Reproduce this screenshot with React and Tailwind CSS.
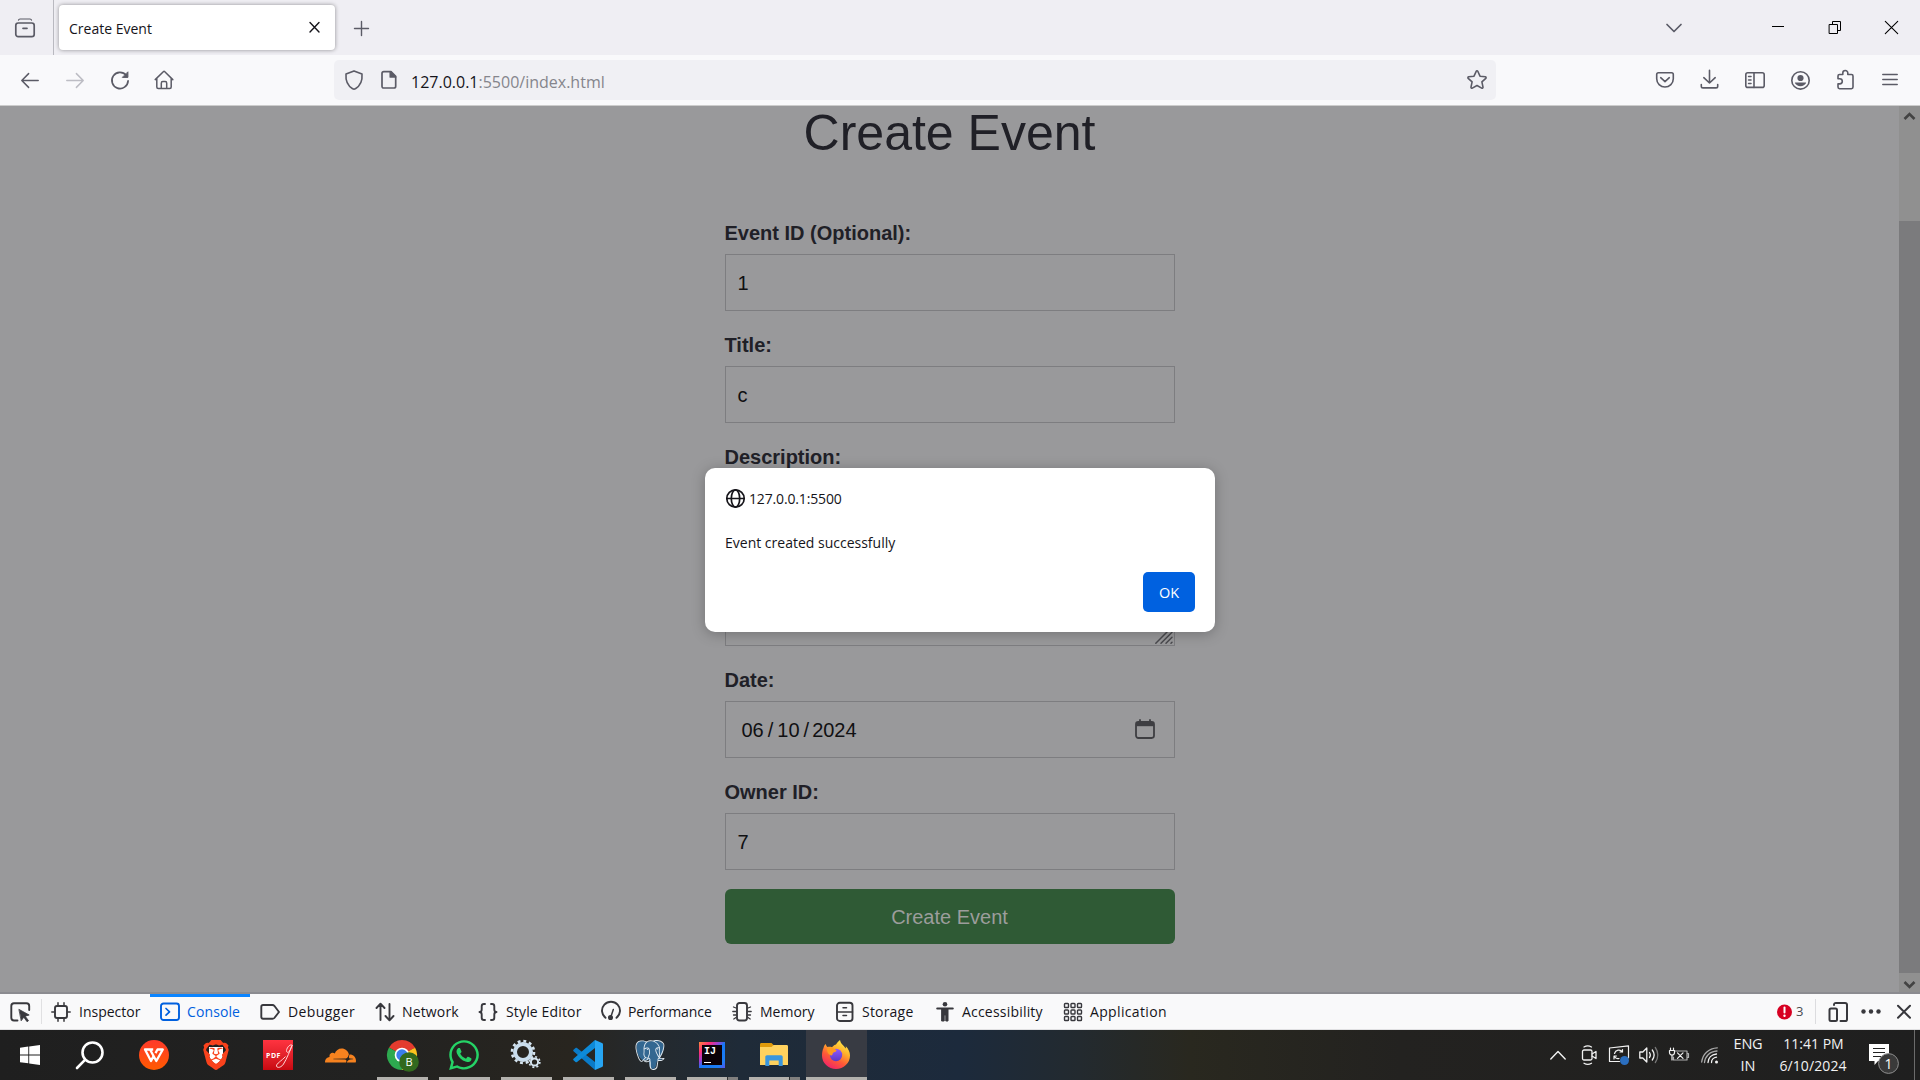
import React from "react";
import { FaWhatsapp } from "react-icons/fa";
import { SiBrave, SiCloudflare, SiPostgresql } from "react-icons/si";

function Icon({ size = 20, w = 1.5, className = "", children, box }) {
  return (
    <svg
      width={size}
      height={size}
      viewBox={box || "0 0 20 20"}
      fill="none"
      stroke="currentColor"
      strokeWidth={w}
      strokeLinecap="round"
      strokeLinejoin="round"
      className={"shrink-0 overflow-visible " + className}
    >
      {children}
    </svg>
  );
}

/* ---------- Browser chrome ---------- */

function TabStrip() {
  return (
    <div className="flex h-[55px] items-center bg-[#efeef3] text-[#5b5b66]">
      <div className="flex h-full w-[54px] items-center border-r border-[#b9b9c0] pl-[15px]">
        <Icon w={1.7} className="mt-[2px]">
          <path d="M3.5 1.2C3.7.3 4.3 0 5 0h10c.7 0 1.3.3 1.5 1.2" strokeWidth="1.2" />
          <rect x=".8" y="4" width="18.4" height="13.6" rx="2.4" />
          <path d="M8 9.3h4" />
        </Icon>
      </div>
      <div className="ml-[5px] flex h-[45px] w-[276px] items-center justify-between rounded-[4px] bg-white pl-[10px] pr-[15px] shadow-[0_0_4px_rgba(0,0,0,0.4)]">
        <span className="pt-[2px] text-[14px] leading-5 text-[#15141a]">Create Event</span>
        <Icon size={11} w={1.4} box="0 0 11 11" className="text-[#15141a]">
          <path d="M1 .5l9 9.4M10 .5L1 9.900" />
        </Icon>
      </div>
      <Icon size={15} w={1.4} box="0 0 15 15" className="ml-[19px] mt-[2px]">
        <path d="M7.5.5v14M.5 7.5h14" />
      </Icon>
      <div className="ml-auto flex items-center">
        <Icon size={16} w={1.7} box="0 0 16 16" className="mr-[90px]">
          <path d="M1 4.5l7 7 7-7" />
        </Icon>
        <Icon size={13} w={1} box="0 0 13 13" className="mr-[44px] text-black">
          <path d="M0 5.500h12" strokeLinecap="butt" />
        </Icon>
        <Icon size={13} w={1} box="0 0 13 13" className="mr-[43px] text-black">
          <g strokeLinejoin="miter">
            <path d="M.5 3.5h8v9h-8z" />
            <path d="M3.5 3.5v-3h8v9h-3" />
          </g>
        </Icon>
        <Icon size={13} w={1.1} box="0 0 13 13" className="mr-[22px] text-black">
          <path d="M.3.3l12.4 12.4M12.7.3L.3 12.7" />
        </Icon>
      </div>
    </div>
  );
}

function Toolbar() {
  return (
    <div className="flex h-[51px] items-center border-b border-[#cccccc] bg-[#f9f9fb] text-[#5b5b66]">
      <div className="flex w-[334px] items-center gap-[25px] pl-[20px]">
        <Icon>
          <path d="M18.2 10.5H2M8.600 3.600L1.800 10.500l6.800 6.900" />
        </Icon>
        <Icon className="text-[#bdbdc4]">
          <path d="M1.800 10.500H18M11.400 3.600l6.800 6.900-6.800 6.900" />
        </Icon>
        <Icon w={1.7}>
          <path d="M16.200 5.200a8.100 8.100 0 1 0 1.900 5.700" />
          <path d="M17.900 2.200v5.200h-5.200z" fill="currentColor" strokeWidth="1" />
        </Icon>
        <Icon className="-ml-px">
          <path d="M1.200 9.600L9.300 1.700c.5-.5 1-.5 1.500 0l8 7.900M2.800 8.500v8.600c0 1 .5 1.500 1.500 1.500h11.400c1 0 1.500-.5 1.500-1.500V8.500M7.300 18.400v-5.200c0-1 .5-1.600 1.500-1.600h2.400c1 0 1.500.6 1.500 1.600v5.200" />
        </Icon>
      </div>
      <div className="flex h-[40px] w-[1162px] items-center rounded-[5px] bg-[#f0f0f4] pl-[10px] pr-[9px]">
        <Icon w={1.6}>
          <path d="M10 .9l8 3.200c.5 5.800-1.200 11.300-6.600 14.600-.9.600-1.900.6-2.800 0C3.200 15.400 1.500 9.900 2 4.100z" />
        </Icon>
        <Icon size={18} w={1.7} box="0 0 18 18" className="ml-[16px]">
          <path d="M2 2.400C2 1.200 2.700.6 3.800.6h7.200l4.700 4.700v9.900c0 1.200-.7 1.800-1.800 1.800H3.800C2.700 17 2 16.400 2 15.200z" />
          <path d="M10.300.8v5.200h5.200z" fill="currentColor" />
        </Icon>
        <span className="ml-[13px] pt-[3px] text-[16px] leading-6 text-[#85858c]">
          <span className="text-[#15141a]">127.0.0.1</span>:5500/index.html
        </span>
        <Icon w={1.6} className="ml-auto">
          <path d="M9.200 1.300c.3-.7 1.300-.7 1.600 0l2.200 4.900 5.300.6c.8.1 1.100 1 .5 1.500l-3.900 3.600 1.100 5.300c.1.800-.7 1.300-1.300.9L10 15.500l-4.700 2.600c-.7.4-1.400-.1-1.300-.9l1.100-5.300L1.200 8.300c-.6-.5-.3-1.400.5-1.500L7 6.200z" />
        </Icon>
      </div>
      <div className="ml-auto flex items-center gap-[25px] pr-[20px]">
        <Icon w={1.6}>
          <path d="M3.400 2.700h13.200c1.100 0 1.700.6 1.700 1.700v4.300a8.300 8.300 0 0 1-16.600 0V4.400c0-1.100.6-1.700 1.700-1.700z" />
          <path d="M5.700 7.700L10 11.700l4.300-4" />
        </Icon>
        <Icon w={1.6}>
          <path d="M9.500.4v12.600M3.800 7.700L9.500 13l5.700-5.300M1.300 14.600v1.600c0 1.100.6 1.700 1.700 1.700h13c1.100 0 1.700-.6 1.700-1.700v-1.600" />
        </Icon>
        <Icon w={1.6}>
          <rect x=".8" y="2.800" width="18.400" height="14.600" rx="2" />
          <path d="M9 2.800v14.600M3.600 6.500h2.400M3.600 10h2.400M3.600 13.500h2.400" />
        </Icon>
        <Icon w={1.6}>
          <circle cx="10.500" cy="10.400" r="8.700" />
          <circle cx="10.500" cy="8" r="3.100" fill="currentColor" stroke="none" />
          <path d="M5.200 12.500h10.600c.3 0 .4.200.3.500-1 2-3.100 3.200-5.600 3.200S5.900 15 4.900 13c-.1-.3 0-.5.3-.5z" fill="currentColor" stroke="none" />
        </Icon>
        <Icon w={1.6}>
          <path d="M3 8V6.100C3 5 3.500 4.500 4.500 4.500h3.300V3a2.500 2.500 0 0 1 5 0v1.500h3.700c1 0 1.500.5 1.500 1.600v11c0 1-.5 1.600-1.500 1.600h-12C3.500 18.700 3 18.100 3 17.100v-3.200h1.700a2.600 2.600 0 0 0 0-5.200H3z" />
        </Icon>
        <Icon w={1.5}>
          <path d="M2.800 4.400h14.400M2.800 9.400h14.400M2.800 14.400h14.400" />
        </Icon>
      </div>
    </div>
  );
}

/* ---------- Page ---------- */

function Field({ label, value, tall, date }) {
  return (
    <div className="flex flex-col">
      <label className="h-[30px] text-[20px] font-bold leading-[18px] text-[#202027]">{label}</label>
      <div
        className={
          "flex border border-[#7d7d80] text-[20px] text-[#101012] " +
          (tall ? "h-[168px] items-end justify-end" : "h-[57px] items-center justify-between") +
          (date ? " pl-[16px] pr-[19px]" : tall ? " p-[1px]" : " px-[12px]")
        }
      >
        {date ? (
          <>
            <span className="flex gap-[4px]">
              <span>06</span>
              <span>/</span>
              <span>10</span>
              <span>/</span>
              <span className="-ml-px">2024</span>
            </span>
            <Icon w={1.8} className="-mt-[2px] text-[#3e3e42]">
              <rect x="1" y="3" width="18" height="16" rx="2.4" />
              <path d="M1 3.500h18v3.700H1z" fill="currentColor" stroke="none" />
              <path d="M5 .9v3M15 .9v3" />
            </Icon>
          </>
        ) : tall ? (
          <Icon size={18} w={1.5} box="0 0 18 18" className="text-[#4a4a4e]">
            <path d="M.8 17.200L17 1M6 17.200L17 6.200M11 17.200l6-6M16 17.200l1-1" />
          </Icon>
        ) : (
          <span>{value}</span>
        )}
      </div>
    </div>
  );
}

function Page() {
  return (
    <div className="relative flex h-[886px] bg-[#99999b] font-['Liberation_Sans',Arial,sans-serif]">
      <div className="flex flex-1 flex-col items-center overflow-hidden">
        <h1 className="mt-[-2px] h-[120px] text-[50px] leading-[58px] text-[#202027]">Create Event</h1>
        <form className="flex w-[450px] flex-col gap-[25px]">
          <Field label="Event ID (Optional):" value="1" />
          <Field label="Title:" value="c" />
          <Field label="Description:" tall />
          <Field label="Date:" date />
          <Field label="Owner ID:" value="7" />
          <button
            type="button"
            className="mt-[-6px] h-[55px] w-full rounded-[6px] bg-[#2f5a35] text-[20px] text-[#9c9d9c]"
          >
            Create Event
          </button>
        </form>
      </div>
      <div className="flex w-[21px] flex-col items-center bg-[#909090] text-[#434343]">
        <div className="flex h-[115px] pt-[5px]">
          <Icon size={11} w={2.6} box="0 0 11 11">
            <path d="M.5 8l5-5 5 5" strokeLinecap="butt" strokeLinejoin="miter" />
          </Icon>
        </div>
        <div className="h-[752px] w-full bg-[#7b7b7d]" />
        <div className="flex flex-1 items-center pt-[3px]">
          <Icon size={11} w={2.6} box="0 0 11 11">
            <path d="M.5 3l5 5 5-5" strokeLinecap="butt" strokeLinejoin="miter" />
          </Icon>
        </div>
      </div>
      <AlertDialog />
    </div>
  );
}

function AlertDialog() {
  return (
    <div
      role="alertdialog"
      className="absolute left-[705px] top-[362px] flex h-[164px] w-[510px] flex-col rounded-[10px] bg-white px-[20px] pt-[20px] font-['Open_Sans','Noto_Sans',sans-serif] text-[14px] leading-5 text-[#15141a] shadow-[0_2px_14px_rgba(0,0,0,0.25)]"
    >
      <div className="flex h-[20px] items-center gap-[5px] font-medium">
        <Icon w={1.7}>
          <circle cx="10.500" cy="10.500" r="8.700" />
          <ellipse cx="10.500" cy="10.500" rx="4.200" ry="8.700" />
          <path d="M1.800 10.500h17.400" />
        </Icon>
        <span className="-ml-px pt-[2px] tracking-[-0.15px]">127.0.0.1:5500</span>
      </div>
      <p className="mt-[25px] h-[20px]">Event created successfully</p>
      <button
        type="button"
        className="mt-[19px] h-[40px] w-[52px] self-end rounded-[5px] bg-[#0061e0] pt-[2px] text-[14.5px] text-white"
      >
        OK
      </button>
    </div>
  );
}

/* ---------- Developer tools bar ---------- */

const devTabs = [
  {
    label: "Inspector",
    width: "w-[109px]",
    text: "",
    icon: (
      <>
        <rect x="4" y="4" width="12" height="12" rx="2" />
        <path d="M7 .8v2.500M13 .8v2.500M7 16.700v2.500M13 16.700v2.500M.8 10h2.500M16.700 10h2.500" strokeWidth="1.500" />
      </>
    ),
  },
  {
    label: "Console",
    width: "w-[100px]",
    text: "-ml-px tracking-[0.1px]",
    active: true,
    icon: (
      <>
        <rect x="1" y="1.500" width="18" height="16.500" rx="2.500" />
        <path d="M6 6.500l3.500 3.300L6 13.200" strokeWidth="1.700" />
      </>
    ),
  },
  {
    label: "Debugger",
    width: "w-[115px]",
    text: "tracking-[0.4px]",
    icon: <path d="M3 3h9.500c.8 0 1.300.2 1.800.8L19 10l-4.700 6c-.5.6-1 .8-1.800.8H3c-1.100 0-1.700-.6-1.700-1.700V4.700C1.300 3.600 1.900 3 3 3z" />,
  },
  {
    label: "Network",
    width: "w-[103px]",
    text: "-ml-px tracking-[0.15px]",
    icon: <path d="M5.500 18V2M1.500 6l4-4.300 4 4.300M14.500 2v16M10.500 14l4 4.300 4-4.300" />,
  },
  {
    label: "Style Editor",
    width: "w-[123px]",
    text: "tracking-[0.15px]",
    icon: (
      <>
        <path d="M7 2H6C4.500 2 3.700 2.800 3.700 4.300v3.200c0 1.500-.7 2.500-2.200 2.500 1.500 0 2.200 1 2.200 2.500v3.200C3.700 17.200 4.500 18 6 18h1" />
        <path d="M13 2h1c1.500 0 2.300.8 2.300 2.300v3.200c0 1.500.7 2.500 2.200 2.500-1.500 0-2.200 1-2.200 2.500v3.200c0 1.500-.8 2.300-2.300 2.300h-1" />
      </>
    ),
  },
  {
    label: "Performance",
    width: "w-[131px]",
    text: "-ml-px tracking-[-0.1px]",
    icon: (
      <>
        <path d="M4.500 15.800A9 9 0 1 1 15.500 15.800" />
        <circle cx="9.500" cy="15.500" r="1.600" fill="currentColor" />
        <path d="M10 14.500l2.300-7" strokeWidth="1.500" />
      </>
    ),
  },
  {
    label: "Memory",
    width: "w-[103px]",
    text: "",
    icon: (
      <>
        <rect x="5" y="1" width="10" height="17.500" rx="2.500" />
        <path d="M4 6L1.500 5M4 9.500H.8M4 13H1.500M4 15.500l-2.200 1.500M16 6l2.500-1M16 9.500h3.200M16 13h2.500M16 15.500l2.200 1.500" strokeWidth="1.300" />
      </>
    ),
  },
  {
    label: "Storage",
    width: "w-[100px]",
    text: "-ml-px tracking-[0.2px]",
    icon: (
      <>
        <rect x="2" y=".8" width="15.500" height="18.200" rx="2.800" />
        <path d="M2 10h15.500M8 5.700h3.500M8 13.500h3.500" strokeWidth="1.500" />
      </>
    ),
  },
  {
    label: "Accessibility",
    width: "w-[128px]",
    text: "-ml-px tracking-[0.2px]",
    icon: (
      <>
        <circle cx="10" cy="2.300" r="2.300" fill="currentColor" stroke="none" />
        <path d="M2.300 6.500h15.400" strokeWidth="2.200" />
        <path d="M7 6.500h6V19h-2.200v-6H9.200v6H7z" fill="currentColor" strokeWidth="1" />
      </>
    ),
  },
  {
    label: "Application",
    width: "w-[124px]",
    text: "-ml-px tracking-[0.35px]",
    icon: (
      <g strokeWidth="1.400">
        {[1.5, 8, 14.5].map((x) =>
          [1.5, 8, 14.5].map((y) => <rect key={x + "-" + y} x={x} y={y} width="4" height="4" rx=".8" />)
        )}
      </g>
    ),
  },
];

function DevTools() {
  return (
    <div className="flex h-[38px] items-center border-b border-t-2 border-b-[#e0e0e2] border-t-[#8b8b90] bg-[#f9f9fa] text-[14px] text-[#38383d]">
      <div className="flex w-[41px] items-center pl-[10px]">
        <Icon w={1.9}>
          <path d="M7.500 18.500H4C2.200 18.500 1.300 17.600 1.300 15.800V4C1.300 2.200 2.200 1.300 4 1.300h12.500c1.800 0 2.700.9 2.700 2.700v4" />
          <path d="M9.200 7.500l10 5.500-4 1.200 3.300 4.500-1.500 1-3.200-4.500-2.400 3.300z" fill="currentColor" strokeWidth=".8" />
        </Icon>
      </div>
      <div className="h-[25px] w-px bg-[#e0e0e2]" />
      <div className="ml-[-1px] flex h-full">
        {devTabs.map((t) => (
          <div
            key={t.label}
            className={
              "flex h-full items-center gap-[8px] whitespace-nowrap border-y-[3px] border-b-transparent pl-[10px] " +
              t.width +
              (t.active ? " border-t-[#0a84ff] text-[#0060df]" : " border-t-transparent")
            }
          >
            <Icon w={1.9}>{t.icon}</Icon>
            <span className={t.text + (t.active ? " text-[#0060df]" : " text-[#15141a]")}>{t.label}</span>
          </div>
        ))}
      </div>
      <div className="ml-auto flex h-full items-center">
        <svg width="16" height="16" viewBox="0 0 16 16">
          <circle cx="7.500" cy="8" r="7.500" fill="#d70022" />
          <path d="M7.500 3.500v5" stroke="#fff" strokeWidth="2" strokeLinecap="round" />
          <circle cx="7.500" cy="11.800" r="1.200" fill="#fff" />
        </svg>
        <span className="ml-[3px] w-[19px] text-[13px] text-[#4a4a4f]">3</span>
        <div className="mr-[13px] h-[25px] w-px bg-[#dcdcdf]" />
        <Icon w={2}>
          <path d="M5 3V2.800C5 1.500 5.700.9 7 .9h9c1.300 0 2 .6 2 1.900v14.400c0 1.300-.7 1.900-2 1.900h-4.500" />
          <rect x=".5" y="6.500" width="7.500" height="12.600" rx="1.500" />
        </Icon>
        <Icon w={0} className="ml-[12px]">
          <g fill="currentColor">
            <circle cx="2.500" cy="9.500" r="2.200" />
            <circle cx="10" cy="9.500" r="2.200" />
            <circle cx="17.500" cy="9.500" r="2.200" />
          </g>
        </Icon>
        <Icon size={14} w={2} box="0 0 14 14" className="ml-[16px] mr-[9px]">
          <path d="M1 .8l12 12M13 .8L1 12.800" />
        </Icon>
      </div>
    </div>
  );
}

/* ---------- Windows taskbar ---------- */

function WindowsLogo() {
  return (
    <svg width="20" height="20" viewBox="0 0 20 20" fill="#fff">
      <path d="M0 2.800l8.300-1.200v7.900H0zM9.200 1.500L20 0v9.500H9.200zM0 10.400h8.300v7.900L0 17.200zM9.200 10.400H20V20L9.200 18.500z" />
    </svg>
  );
}

function WpsLogo() {
  return (
    <svg width="30" height="30" viewBox="0 0 30 30">
      <defs>
        <linearGradient id="wps" x1="0" y1="0" x2="0" y2="1">
          <stop offset="0" stopColor="#ff3a2b" />
          <stop offset="1" stopColor="#ff5a00" />
        </linearGradient>
      </defs>
      <circle cx="15" cy="15" r="15" fill="url(#wps)" />
      <path
        d="M14.200 9.500H6l6 11.500 2.800-5.400M11 9.500l6.300 11.500L23.800 9.500h-5.300l-2 3.600"
        fill="none"
        stroke="#fff"
        strokeWidth="2.300"
        strokeLinejoin="round"
      />
    </svg>
  );
}

function BraveLogo() {
  return (
    <div className="relative flex h-[30px] w-[30px] items-center justify-center">
      <svg width="14" height="20" viewBox="0 0 14 20" className="absolute">
        <path d="M0 2h14v9l-2 4-5 5-5-5-2-4z" fill="#fff" />
      </svg>
      <SiBrave size={30} color="#f9421c" className="relative" />
    </div>
  );
}

function PdfLogo() {
  return (
    <div className="relative flex h-[30px] w-[30px] items-center bg-linear-to-b from-[#ff3340] to-[#c80810]">
      <span className="pl-[3px] text-[7px] font-bold leading-none tracking-[0.5px] text-white">PDF</span>
      <svg width="30" height="30" viewBox="0 0 30 30" className="absolute inset-0" fill="none" stroke="#ffd6d6" strokeWidth="1">
        <path d="M29.500 5.500c-2-2-5.500 1.500-6 5-.2 2.500 2 2.500 3.700-.5L29 5.500c-2 5-5 13-8.500 18.500-2 3.500-6.500 4.500-7 2-.3-2.500 5-5 9-9.500" />
      </svg>
    </div>
  );
}

function ChromeLogo() {
  return (
    <svg width="32" height="32" viewBox="0 0 32 32" className="ml-[2px] mt-[1px] overflow-visible">
      <path d="M15 15L2 7.500A15 15 0 0 1 28 7.500z" fill="#e33b2e" />
      <path d="M15 15L28 7.500A15 15 0 0 1 15 30z" fill="#fcc31e" />
      <path d="M15 15v15A15 15 0 0 1 2 7.500z" fill="#2da94f" />
      <path d="M2 7.500h26v.8H15z" fill="#e33b2e" />
      <circle cx="15" cy="15" r="7.300" fill="#fff" />
      <circle cx="15" cy="15" r="5.700" fill="#3b7ded" />
      <circle cx="22" cy="22" r="9.800" fill="#32691e" />
      <text x="22" y="26" fontSize="11" fill="#fff" textAnchor="middle">
        B
      </text>
    </svg>
  );
}

function GearsLogo() {
  return (
    <svg width="30" height="30" viewBox="0 0 30 30" fill="none" className="overflow-visible">
      <circle cx="12" cy="12" r="8" stroke="#c9dded" strokeWidth="4" />
      <circle cx="12" cy="12" r="11" stroke="#d5e4f0" strokeWidth="2.600" strokeDasharray="2.900 2.860" />
      <circle cx="23.500" cy="22" r="3.600" stroke="#d5e4f0" strokeWidth="2" />
      <circle cx="23.500" cy="22" r="5.300" stroke="#d5e4f0" strokeWidth="1.700" strokeDasharray="2 2.160" />
    </svg>
  );
}

function CodeLogo() {
  return (
    <svg width="30" height="30" viewBox="0 0 30 30">
      <path d="M.5 9.800l2-1.700c.5-.4 1-.4 1.500 0L22 22v8L.5 11.200c-.5-.5-.5-.9 0-1.400z" fill="#0a7bc8" />
      <path d="M.5 20.200l2 1.700c.5.4 1 .4 1.500 0L22 8V0L.5 18.800c-.5.5-.5.9 0 1.400z" fill="#0d8ad8" />
      <path d="M22 0l7 3c.7.300 1 .8 1 1.500v21c0 .7-.3 1.200-1 1.500l-7 3z" fill="#27a5f2" />
    </svg>
  );
}

function PostgresLogo() {
  return (
    <div className="relative h-[30px] w-[30px]">
      <svg width="30" height="30" viewBox="0 0 30 30" className="absolute inset-0">
        <path d="M2 3c3-3 8-2 11-1 4-1.500 12-2.500 15 2 2 5-1 10-3 14l3 1-6 2c-1 4-1 8-4 8s-4-4-4-9l-5 .5C4 20 0 9 2 3z" fill="#336791" />
      </svg>
      <SiPostgresql size={30} color="#dfe8ef" className="relative" />
    </div>
  );
}

function IntellijLogo() {
  return (
    <div className="flex h-[26px] w-[26px] items-center justify-center bg-[linear-gradient(135deg,#fb8a3c_0%,#fe2d76_22%,#a13fd0_38%,#1478f5_52%,#1e7df5_85%,#5b50e8_100%)]">
      <div className="flex h-[20px] w-[20px] flex-col justify-between bg-[#0a0008] p-[2px]">
        <span className="font-['Liberation_Mono',monospace] text-[10px] font-bold leading-[9px] text-white">IJ</span>
        <span className="h-[1px] w-[7px] bg-white" />
      </div>
    </div>
  );
}

function ExplorerLogo() {
  return (
    <svg width="28" height="24" viewBox="0 0 28 24">
      <path d="M0 1.500C0 .5.5 0 1.500 0h10l2 2-1.500 3H0z" fill="#e09a0a" />
      <path d="M0 4h11.500l2-2H26.500c1 0 1.500.5 1.500 1.500V22H0z" fill="#ffd25e" />
      <path d="M5.300 23V14c0-1 .7-1.700 1.700-1.700h14c1 0 1.700.7 1.700 1.700v9h-4v-5.500h-9.400V23z" fill="#3a96dd" />
    </svg>
  );
}

function FirefoxLogo() {
  return (
    <svg width="30" height="30" viewBox="0 0 30 30" className="-ml-[2px]">
      <defs>
        <linearGradient id="fx" x1=".8" y1="0" x2=".25" y2="1">
          <stop offset="0" stopColor="#fff44f" />
          <stop offset=".35" stopColor="#ffb02a" />
          <stop offset=".65" stopColor="#ff5a36" />
          <stop offset="1" stopColor="#f01e6e" />
        </linearGradient>
        <linearGradient id="fxg" x1="0" y1="0" x2="0" y2="1">
          <stop offset="0" stopColor="#9059ff" />
          <stop offset="1" stopColor="#5b3ac4" />
        </linearGradient>
      </defs>
      <path
        d="M2.500 8c.2-1.500 1-3 2.300-4 .2 1.400.9 2.400 1.700 3C8 6.700 9.500 6.700 11 7.300c1.300-1.700 3-2.500 4-2.800C16 2.800 17.500 1 19 0c.6 3.500 2.500 4.500 4 6.300.8.800 1.200 1.500 1.500 2.300.4-.8.5-1.500.3-2.400 2.700 2.600 4.200 6 4.200 9.300A14 13.500 0 0 1 15 29 14 13.500 0 0 1 1 15.500C1 12.500 1.500 10 2.500 8z"
        fill="url(#fx)"
      />
      <circle cx="15" cy="15" r="6.200" fill="url(#fxg)" />
      <path d="M6 8.500c3-1.500 5-1.200 6.500 0 1.500 1 3 1 3 2.200-.5 1.300-2.300 1-3.500 2.300-.8 1 0 2-1.500 2.500C8 15 5.500 12 6 8.500z" fill="#ff9a1f" />
    </svg>
  );
}

const pinned = [
  { key: "wps", icon: <WpsLogo /> },
  { key: "brave", icon: <BraveLogo /> },
  { key: "pdf", icon: <PdfLogo /> },
  { key: "cloudflare", icon: <SiCloudflare size={31} color="#f6821f" /> },
  { key: "chrome", icon: <ChromeLogo />, open: true },
  { key: "whatsapp", icon: <FaWhatsapp size={34} color="#25d366" />, open: true },
  { key: "gears", icon: <GearsLogo />, open: true },
  { key: "code", icon: <CodeLogo />, open: true },
  { key: "postgres", icon: <PostgresLogo />, open: true },
  { key: "intellij", icon: <IntellijLogo />, open: true, stacked: true },
  { key: "explorer", icon: <ExplorerLogo />, open: true, stacked: true },
];

function Tray() {
  return (
    <div className="ml-auto flex h-full items-center text-[#f2f2f2]">
      <Icon size={16} w={1.4} box="0 0 16 16" className="ml-px">
        <path d="M.8 12L8 4.500l7.200 7.500" />
      </Icon>
      <Icon size={16} w={1.3} box="0 0 16 16" className="ml-[15px]">
        <rect x="1.500" y="3" width="9.500" height="10" rx="1.500" />
        <path d="M11 7l4-2.500v7L11 9M3 0C5-1.200 8.500-1.200 10.500 0M3 16.300c2 1.200 5.500 1.200 7.500 0" />
      </Icon>
      <Icon w={1.2} className="ml-[12px]">
        <path d="M.5 3L19.500.8v12M.5 3v13.500h10" />
        <path d="M5.500 8.500a4.500 4.500 0 0 1 8-1.500V4.500M13.500 7H11M5 14v-3h2.500M5.500 11.500a4 4 0 0 0 4.500 2" />
        <circle cx="15.500" cy="15.500" r="4.500" fill="#2b6fc0" stroke="none" />
      </Icon>
      <Icon w={1.3} className="ml-[10px]">
        <path d="M.8 7v6h3l4 4V3L3.800 7zM10.500 7.500c1 1.500 1 3.500 0 5M13.300 5c2.200 3 2.200 7 0 10" />
        <path d="M16.300 2.500c3.300 4.500 3.300 10.500 0 15" stroke="#777" />
      </Icon>
      <Icon w={1.2} className="ml-[10px]">
        <path d="M5.500 6H18v9H4.500v-3M18.200 8.500h1.300v4h-1.300" stroke="#b0b0b0" />
        <path d="M1.500 3v2.500M4.500 3v2.500M.5 5.500h5v2a2.500 2.500 0 0 1-5 0zM3 10v5M8.500 7.800l5.500 5.500M14 7.800l-5.500 5.500" />
      </Icon>
      <Icon size={17} w={1.3} box="0 0 17 17" className="ml-[13px]">
        <circle cx="14.500" cy="15" r="1.500" fill="currentColor" stroke="none" />
        <path d="M9.500 15.500c0-2.500 2-5 5-5.300M6 15.500c.2-4.500 3.500-8 8.500-8.500" />
        <path d="M2.500 15.500C3 9.500 7.500 4.500 15 4M-.3 15C.5 7.500 6.500 1.200 15.300.8" stroke="#aaa" />
      </Icon>
      <div className="ml-[14px] flex w-[30px] flex-col items-center text-[14.5px] leading-[22px]">
        <span className="tracking-[-0.2px]">ENG</span>
        <span>IN</span>
      </div>
      <div className="ml-[14px] flex w-[72px] flex-col items-center whitespace-nowrap text-[14px] leading-[22px]">
        <span className="-mr-px">11:41 PM</span>
        <span className="tracking-[0.1px]">6/10/2024</span>
      </div>
      <svg width="30" height="30" viewBox="0 0 30 30" className="ml-[20px] mt-[8px]">
        <path d="M0 0h20v17H9l-3.500 4V17H0z" fill="#fff" />
        <path d="M4 4.500h12M4 8.500h12M4 12.500h8" stroke="#222" strokeWidth="1.100" />
        <circle cx="19.500" cy="19.500" r="9.900" fill="#3a3a3a" stroke="#8f8f8f" strokeWidth="1" />
        <text x="19.500" y="24.800" fontSize="14" fill="#fff" textAnchor="middle">
          1
        </text>
      </svg>
      <div className="ml-[15px] mr-[5px] h-full w-px bg-[#6b6b6b]" />
    </div>
  );
}

function Taskbar() {
  return (
    <div className="flex h-[50px] bg-[linear-gradient(to_right,#1f1f1f_0px,#222221_380px,#28251f_570px,#25292c_640px,#1f2b38_740px,#1c2a3c_960px,#232a2f_1080px,#29281f_1190px,#232220_1400px,#1f1f1f_1920px)]">
      <div className="flex w-[60px] items-center justify-center">
        <WindowsLogo />
      </div>
      <div className="flex w-[63px] items-center justify-center pr-[3px]">
        <Icon size={28} w={2.6} box="0 0 28 28" className="text-white">
          <circle cx="16.500" cy="11.500" r="10" />
          <path d="M9 18.800L1 27" />
        </Icon>
      </div>
      {pinned.map((p) => (
        <div key={p.key} className="flex w-[62px] flex-col items-center">
          <div className="flex h-[47px] items-center pt-[3px]">{p.icon}</div>
          {p.open && (
            <div className="flex h-[3px] w-[51px] justify-end bg-[#b3b1ad]">
              {p.stacked && <div className="w-[11px] border-l border-[#333] bg-[#807f7e]" />}
            </div>
          )}
        </div>
      ))}
      <div className="ml-[1px] flex w-[61px] flex-col items-center bg-[#383b43]">
        <div className="flex h-[47px] items-center pt-[3px]">
          <FirefoxLogo />
        </div>
        <div className="h-[3px] w-full bg-[#b3b1ad]" />
      </div>
      <Tray />
    </div>
  );
}

export default function App() {
  return (
    <div className="flex h-[1080px] w-[1920px] flex-col overflow-hidden font-['Open_Sans','Noto_Sans',sans-serif]">
      <TabStrip />
      <Toolbar />
      <Page />
      <DevTools />
      <Taskbar />
    </div>
  );
}
